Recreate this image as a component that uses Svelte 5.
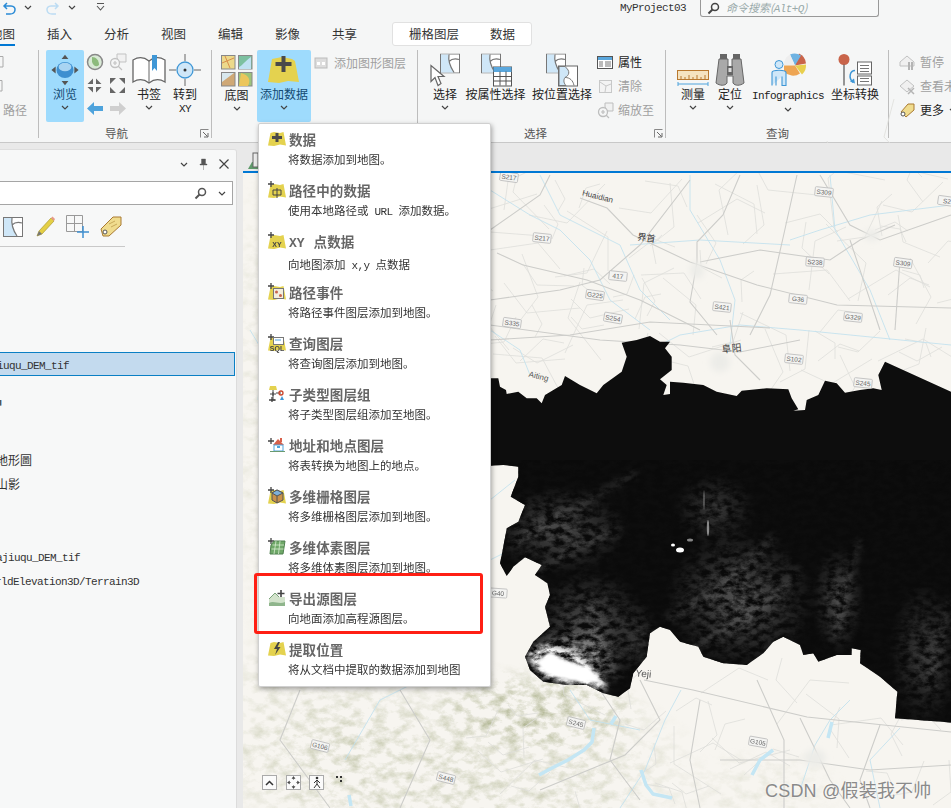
<script>
  const menu = [
    ['数据', '将数据添加到地图。', 'plus'],
    ['路径中的数据', '使用本地路径或<i>URL</i>添加数据。', 'path'],
    ['<i>XY</i>点数据', '向地图添加<i>x,y</i>点数据', 'xy'],
    ['路径事件', '将路径事件图层添加到地图。', 'event'],
    ['查询图层', '将查询图层添加到地图。', 'sql'],
    ['子类型图层组', '将子类型图层组添加至地图。', 'sub'],
    ['地址和地点图层', '将表转换为地图上的地点。', 'house'],
    ['多维栅格图层', '将多维栅格图层添加到地图。', 'cube'],
    ['多维体素图层', '将多维体素图层添加到地图。', 'voxel'],
    ['导出源图层', '向地面添加高程源图层。', 'ground'],
    ['提取位置', '将从文档中提取的数据添加到地图', 'bolt']
  ];

  const raw = [5,175,25,175,30,200,48,210,50,222,85,215,110,235,140,235,155,250,165,225,215,195,225,168,245,180,270,195,320,220,340,195,395,155,410,110,395,68,440,60,480,48,510,65,540,65,525,85,545,110,545,150,510,178,530,195,520,225,540,222,540,185,580,188,640,195,680,215,740,228,755,212,830,205,895,208,905,235,925,268,910,272,945,270,950,240,985,225,1005,182,1040,190,1065,218,1110,210,1150,205,1175,210,1165,165,1185,125,1390,218,1390,1208,1215,1195,1222,1115,1170,1070,1110,1030,1112,990,1085,985,1085,1005,1040,1005,985,1025,970,1000,940,1005,930,975,880,950,850,965,820,1000,770,1035,700,1030,640,1010,625,980,570,965,540,930,510,920,480,940,470,1010,430,1060,420,1105,385,1130,340,1120,290,1095,230,1095,160,1085,120,1050,105,1010,130,965,180,920,165,860,180,825,172,790,135,765,155,735,105,712,70,740,50,768,30,730,40,680,50,625,85,605,105,555,62,530,85,470,85,440,40,435,-60,440,-60,175];
  let dem = '';
  for (let i = 0; i < raw.length; i += 2) dem += (490 + raw[i] / 3).toFixed(1) + ',' + (320 + raw[i + 1] / 3).toFixed(1) + ' ';

  const glows = [
    [560, 530, 70, 45, 0.26], [590, 630, 60, 62, 0.3], [740, 600, 76, 70, 0.3], [715, 510, 42, 38, 0.18],
    [838, 600, 26, 55, 0.26], [925, 655, 36, 75, 0.2], [570, 660, 52, 30, 0.8], [640, 640, 20, 40, 0.14]
  ];
  const ridges = [
    '510,545 560,515 637,473',
    '525,580 580,545 620,530',
    '665,620 720,590 775,535',
    '690,650 760,610 800,570',
    '835,640 845,590 860,540',
    '590,600 600,650 620,680',
    '930,690 940,640 951,600'
  ];

  const roads = [
    '497,253 523,265 587,280 640,300 700,330',
    '580,198 607,208 633,235 690,262 757,285 837,305 951,308',
    '797,175 783,238 770,295 750,335',
    '740,175 723,215 697,242 697,262 690,302 717,335',
    '490,300 560,290 600,280 640,245 690,180',
    '490,230 540,195 550,175',
    '820,175 850,225 880,240 951,215',
    '700,262 760,250 830,260 860,240 895,225',
    '850,240 880,330',
    '900,260 895,330',
    '490,340 570,335 650,322 770,328',
    '490,325 600,340 680,345 740,352 800,340',
    '730,320 735,355 760,380',
    '644,680 693,690 807,717 951,732',
    '757,680 784,740 784,808',
    '600,690 620,720 610,760 640,800',
    '640,680 660,720 625,755 540,790',
    '700,700 690,760 700,808',
    '720,760 800,760 870,770 951,765',
    '800,718 830,780 850,808',
    '880,725 860,780 870,808',
    '300,690 280,740 330,808',
    '400,690 430,740 400,808'
  ];
  let seed = 41;
  const rnd = () => ((seed = (seed * 16807) % 2147483647) / 2147483647);
  const thin = [];
  for (let i = 0; i < 120; i++) {
    const low = i > 85;
    const x = 490 + rnd() * 460, y = low ? 690 + rnd() * 115 : 175 + rnd() * 190;
    const a = rnd() * 6.28;
    const l = 18 + rnd() * 38;
    const bx = x + Math.cos(a) * l, by = y + Math.sin(a) * l;
    const cx = bx + Math.cos(a + 1) * l * 0.7, cy = by + Math.sin(a + 1) * l * 0.7;
    thin.push(`${x.toFixed(0)},${y.toFixed(0)} ${bx.toFixed(0)},${by.toFixed(0)} ${cx.toFixed(0)},${cy.toFixed(0)}`);
  }
  const rivers = [
    '490,190 530,215 560,230 590,260 610,300 650,330',
    '540,175 560,215 620,245 640,290 670,320',
    '690,175 690,210 720,260 735,300 730,345',
    '830,175 835,230 870,290 890,340',
    '790,240 820,230 870,215 951,205',
    '630,245 700,240 790,245',
    '490,330 520,350 530,375',
    '660,345 680,335 740,325 800,330 951,345',
    '490,500 515,480',
    '490,560 520,545',
    '681,690 665,720 645,770 620,808',
    '850,700 830,720 815,745 800,790',
    '900,728 870,760 880,808',
    '570,690 590,720 640,730',
    '345,760 380,700 420,680',
    '250,330 262,350 258,400'
  ];
  const lakes = [
    '594,728 592,742 584,750 568,760 552,768 539,775',
    '641,770 646,785 653,794 672,798',
    '349,795 351,806',
    '616,716 611,724',
    '832,722 828,738',
    '773,750 760,760 752,775'
  ];
  const badges = [
    ['S217',509,177,8],['S217',542,238,6],['417',618,276,6],['G225',595,295,8],['S254',613,318,10],['S335',512,323,8],
    ['S421',722,307,6],['G36',798,299,6],['G329',853,317,6],['S238',815,262,4],['S309',824,192,6],['S309',903,263,8],
    ['S2',947,201,8],['S102',794,359,6],['S245',863,383,6],['G40',498,593,4],['S245',576,723,14],['G106',320,746,14],
    ['S448',446,778,14],['G105',758,742,10]
  ];
  const places = [['Huaidian',597,199,14,8,'#444'],['界首',646,241,8,9,'#333'],['Aiting',538,379,14,8,'#555'],['阜阳',732,352,-6,10,'#444'],['Yeji',643,677,6,10,'#555']];
</script>

<svg class="defs" width="0" height="0" aria-hidden="true">
  <defs>
    <symbol id="yellow" viewBox="0 0 18 18">
      <path d="M2.500 3 L6 2 L12 3 L15.500 2 L18 15.500 L12 14.500 L6 16 L0 15.500 Z" fill="#e4d24f"/>
    </symbol>
    <symbol id="tile" viewBox="0 0 20 20">
      <rect x=".5" y=".5" width="19" height="19" fill="#fff" stroke="#777"/>
      <path d="M1 1H9C8 7 10 13 14 19H1Z" fill="#cfe7f8"/>
      <path d="M9 1C8 7 10 13 14 19M9 8C12 5 16 5 19 6" fill="none" stroke="#777" stroke-width="1.200"/>
    </symbol>
    <symbol id="chev" viewBox="0 0 8 5">
      <path d="M1 1L4 4L7 1" fill="none" stroke="#444" stroke-width="1.200"/>
    </symbol>
    <symbol id="launch" viewBox="0 0 9 9">
      <path d="M.5 8.500V.5H8.500" fill="none" stroke="#888"/><path d="M3 3L7.500 7.500M8 4V8H4" fill="none" stroke="#666"/>
    </symbol>
  </defs>
</svg>

<div class="app">
  <div class="titlebar">
    <svg class="undo" width="13" height="14" viewBox="0 0 13 14"><path d="M4 2L1 5L4 8M1 5H8C14 5 13 13 7 13H3" fill="none" stroke="#2a8bd6" stroke-width="1.500"/></svg>
    <svg class="tchev" width="8" height="5"><use href="#chev"/></svg>
    <svg class="redo" width="13" height="14" viewBox="0 0 13 14"><path d="M9 2L12 5L9 8M12 5H5C-1 5 0 13 6 13H10" fill="none" stroke="#bcdcf3" stroke-width="1.500"/></svg>
    <svg class="tchev2" width="8" height="5"><use href="#chev"/></svg>
    <svg class="tmore" width="9" height="9" viewBox="0 0 9 9"><path d="M1 .5H8M1 3L4.500 7L8 3" fill="none" stroke="#555" stroke-width="1.100"/></svg>
    <span class="project"><i class="lat">MyProject03</i></span>
    <div class="search">
      <svg width="13" height="13" viewBox="0 0 13 13"><circle cx="8" cy="5" r="3.500" fill="none" stroke="#444" stroke-width="1.500"/><path d="M5.500 7.500L1.500 11.500" stroke="#444" stroke-width="2"/></svg>
      <span>命令搜索(<i class="lat">Alt+Q</i>)</span>
    </div>
  </div>

  <div class="tabs">
    <span class="tab first">地图</span>
    <span class="tab">插入</span><span class="tab">分析</span><span class="tab">视图</span><span class="tab">编辑</span><span class="tab">影像</span><span class="tab">共享</span>
    <div class="context"><span>栅格图层</span><span>数据</span></div>
  </div>

  <div class="ribbon">
    <section class="group g1">
      <div class="frag"><svg width="4" height="12"><path d="M0 .5H3V11H0" fill="none" stroke="#aaa"/></svg></div>
      <div class="frag"><svg width="3" height="12"><path d="M0 .5H2V11H0" fill="none" stroke="#aaa"/></svg></div>
      <div class="frag dim text">路径</div>
    </section>

    <section class="group g2">
      <div class="body">
        <div class="big w38 on">
          <svg width="38" height="40" viewBox="0 0 38 40">
            <path d="M19 2L23 7H15ZM19 38L23 33H15ZM3 20L8 16V24ZM35 20L30 16V24Z" fill="#555"/>
            <ellipse cx="19" cy="20" rx="10" ry="9.500" fill="#3d8fd0"/>
            <ellipse cx="19" cy="16.500" rx="7.500" ry="5" fill="#a9d4f2"/>
          </svg>
          <span class="lb on-text">浏览</span>
          <svg class="cv" width="8" height="5"><use href="#chev"/></svg>
        </div>
        <div class="grid6">
          <svg width="18" height="18" viewBox="0 0 18 18"><circle cx="9" cy="9" r="7.500" fill="#d9ead6" stroke="#888" stroke-width="1.500"/><path d="M6 4C10 4 13 7 13 12C10 15 7 12 6 9Z" fill="#8cbb7c"/></svg>
          <svg width="18" height="18" viewBox="0 0 18 18" opacity=".55"><circle cx="6" cy="10" r="4.500" fill="none" stroke="#999" stroke-width="1.300"/><path d="M4 10H8M6 8V12M9 13L13 17" stroke="#999" stroke-width="1.200"/><path d="M8 1H17V9H11L8 5Z" fill="#eee" stroke="#999"/></svg>
          <svg width="17" height="17" viewBox="0 0 17 17"><path d="M7 7V1.500L1.500 7ZM10 7V1.500L15.500 7ZM7 10V15.500L1.500 10ZM10 10V15.500L15.500 10Z" fill="#666"/></svg>
          <svg width="17" height="17" viewBox="0 0 17 17"><path d="M1 1H7L1 7ZM16 1H10L16 7ZM1 16H7L1 10ZM16 16H10L16 10Z" fill="#666"/></svg>
          <svg width="18" height="15" viewBox="0 0 18 15"><path d="M1 7.500L8 1V5H17V10H8V14Z" fill="#4ea3dc"/></svg>
          <svg width="18" height="15" viewBox="0 0 18 15"><path d="M17 7.500L10 1V5H1V10H10V14Z" fill="#cfcfcf"/></svg>
        </div>
        <div class="big w34 mk5">
          <svg width="34" height="30" viewBox="0 0 34 30"><path d="M1 5C6 2 12 2 17 6C22 2 28 2 33 5V27C28 24 22 24 17 28C12 24 6 24 1 27Z" fill="#fff" stroke="#666" stroke-width="1.300"/><path d="M17 6V28" stroke="#666"/><path d="M20 0H25V16L22.500 13L20 16Z" fill="#3f97d6"/></svg>
          <span class="lb">书签</span>
          <svg class="cv" width="8" height="5"><use href="#chev"/></svg>
        </div>
        <div class="big w32 mk3">
          <svg width="32" height="32" viewBox="0 0 32 32"><path d="M16 0V7M16 25V32M0 16H7M25 16H32" stroke="#666"/><circle cx="16" cy="16" r="8" fill="#cfe7f8" stroke="#3f97d6" stroke-width="1.300"/><circle cx="16" cy="16" r="1.500" fill="#333"/></svg>
          <span class="lb">转到</span>
          <span class="sub"><i class="lat">XY</i></span>
        </div>
      </div>
      <div class="glabel gl2">导航</div>
      <svg class="launcher" width="9" height="9"><use href="#launch"/></svg>
    </section>

    <section class="group g3">
      <div class="body">
        <div class="big w33">
          <svg class="map4" width="32" height="32" viewBox="0 0 32 32">
            <rect x=".5" y=".5" width="13.500" height="13.500" fill="#ecd98b" stroke="#888"/><path d="M1 8L13 3M4 1L9 13" stroke="#d98e4a"/>
            <rect x="17.500" y=".5" width="13.500" height="13.500" fill="#7cc0a0" stroke="#888"/><path d="M18 12C22 10 24 6 30 2V14H18Z" fill="#bfe1f2"/>
            <rect x=".5" y="17.500" width="13.500" height="13.500" fill="#cfa876" stroke="#888"/><path d="M1 18H13L1 27Z" fill="#d8e8ee"/>
            <rect x="17.500" y="17.500" width="13.500" height="13.500" fill="#9dc47a" stroke="#888"/><path d="M20 18C28 20 30 25 27 31H18Z" fill="#ecc65c"/>
          </svg>
          <span class="lb">底图</span>
          <svg class="cv" width="8" height="5"><use href="#chev"/></svg>
        </div>
        <div class="big w54 on mk4">
          <svg width="32" height="34" viewBox="0 0 32 34"><path d="M4 6L14 4L24 6L27 8L31 29L20 28L11 30L0 29Z" fill="#e4d24f"/><path d="M13.500 3H17.500V9H23.500V13H17.500V19H13.500V13H7.500V9H13.500Z" fill="#4a4a4a"/></svg>
          <span class="lb on-text">添加数据</span>
          <svg class="cv" width="8" height="5"><use href="#chev"/></svg>
        </div>
        <div class="smallrow dim top6">
          <svg width="14" height="12" viewBox="0 0 14 12"><rect x="1" y="1" width="12" height="10" fill="#ddd" stroke="#bbb"/><rect x="3" y="5" width="3" height="3" fill="#fff"/><rect x="8" y="5" width="3" height="3" fill="#fff"/></svg>
          <span>添加图形图层</span>
        </div>
      </div>
    </section>

    <section class="group g4">
      <div class="body">
        <div class="big w30">
          <svg width="30" height="33" viewBox="0 0 30 33"><use href="#tile" x="10" y="0" width="20" height="20"/><path d="M1 12L1 28L5 24L8 32L11 30L8 23L14 23Z" fill="#fff" stroke="#666" stroke-width="1.200"/></svg>
          <span class="lb">选择</span>
          <svg class="cv" width="8" height="5"><use href="#chev"/></svg>
        </div>
        <div class="big w59 mk6">
          <svg width="32" height="33" viewBox="0 0 32 33"><use href="#tile" x="1" y="0" width="20" height="20"/><rect x="13.500" y="13.500" width="18" height="19" fill="#fff" stroke="#555"/><rect x="13.500" y="13.500" width="18" height="5" fill="#5aa7dd"/><path d="M14 23H31M14 27.500H31M20 18V32M26 18V32" stroke="#555"/></svg>
          <span class="lb">按属性选择</span>
        </div>
        <div class="big w60 mk7">
          <svg width="32" height="33" viewBox="0 0 32 33"><use href="#tile" x="0" y="0" width="20" height="20"/><rect x="12.500" y="12.500" width="19" height="20" fill="#fff" stroke="#666"/><path d="M13 13H19C25 18 23 22 19 24C17 27 18 30 20 32H13Z" fill="#cfe7f8" stroke="#777"/><path d="M19 24C24 24 27 27 28 32" fill="none" stroke="#777"/></svg>
          <span class="lb">按位置选择</span>
        </div>
        <div class="smalls mk5">
          <div class="smallrow">
            <svg width="16" height="13" viewBox="0 0 16 13"><rect x=".5" y=".5" width="15" height="12" fill="#fff" stroke="#555"/><rect x="1" y="1" width="14" height="3" fill="#5aa7dd"/><path d="M2 6H6M8 6H14M2 8H6M8 8H14M2 10H6M8 10H14" stroke="#777"/></svg>
            <span>属性</span>
          </div>
          <div class="smallrow dim">
            <svg width="16" height="13" viewBox="0 0 16 13" opacity=".6"><rect x="2.500" y=".5" width="12" height="12" fill="#f2f2f2" stroke="#aaa"/><path d="M3 2L9 6L8 12M9 6L14 4" fill="none" stroke="#aaa"/></svg>
            <span>清除</span>
          </div>
          <div class="smallrow dim">
            <svg width="16" height="15" viewBox="0 0 16 15" opacity=".6"><circle cx="6" cy="9" r="4.500" fill="none" stroke="#999" stroke-width="1.300"/><path d="M4 9H8M6 7V11M9 12L12 15" stroke="#999" stroke-width="1.200"/><path d="M8 0H16V8H11L8 4Z" fill="#eee" stroke="#999"/></svg>
            <span>缩放至</span>
          </div>
        </div>
      </div>
      <div class="glabel gl4">选择</div>
      <svg class="launcher" width="9" height="9"><use href="#launch"/></svg>
    </section>

    <section class="group g5">
      <div class="body">
        <div class="big w34">
          <svg class="low" width="32" height="17" viewBox="0 0 32 17"><rect x=".5" y=".5" width="31" height="9" fill="#f5e3c0" stroke="#b9792f"/><path d="M4 10V6M8 10V7M12 10V5M16 10V7M20 10V5M24 10V7M28 10V5" stroke="#b9792f"/><path d="M1 14H31M1 12V16M31 12V16" stroke="#4ea3dc"/></svg>
          <span class="lb">测量</span>
          <svg class="cv" width="8" height="5"><use href="#chev"/></svg>
        </div>
        <div class="big w30 mk5">
          <svg width="30" height="32" viewBox="0 0 30 32"><rect x="5" y="0" width="7" height="5" fill="#666"/><rect x="18" y="0" width="7" height="5" fill="#666"/><path d="M4 5H13V14H17V5H26L29 29C25 32 20 32 18 29V22H12V29C10 32 5 32 1 29Z" fill="#a9a9a9" stroke="#666"/><rect x="12" y="12" width="6" height="9" fill="#666"/><rect x="13.500" y="14" width="3" height="4" fill="#ddd"/></svg>
          <span class="lb">定位</span>
          <svg class="cv" width="8" height="5"><use href="#chev"/></svg>
        </div>
        <div class="big w72 mk7">
          <svg width="36" height="33" viewBox="0 0 36 33"><path d="M29 0A12 12 0 0 1 36 10L25 12Z" fill="#c9644a"/><path d="M20 1A12 12 0 0 1 31 2L25 12Z" fill="#6fb3e2"/><path d="M14 12A12 12 0 0 1 20 1L25 12Z" fill="#eee"/><path d="M14 12H25L30 20A12 12 0 0 1 14 18Z" fill="#eea553"/><path d="M25 12L36 11A12 12 0 0 1 32 21Z" fill="#e8cf4d"/><circle cx="9" cy="11" r="4" fill="#cfe7f8" stroke="#3f97d6"/><path d="M2 32V19C2 16 16 16 16 19V32H12V23M6 23V32Z" fill="#cfe7f8" stroke="#3f97d6" stroke-width="1.100"/></svg>
          <span class="lb"><i class="lat">Infographics</i></span>
          <svg class="cv" width="8" height="5"><use href="#chev"/></svg>
        </div>
        <div class="big w50 mk6">
          <svg width="34" height="33" viewBox="0 0 34 33"><circle cx="6" cy="6" r="5.500" fill="#c9644a"/><path d="M6 11V32" stroke="#555" stroke-width="1.200"/><path d="M17 17C12 17 10 24 15 29" fill="none" stroke="#3f97d6" stroke-width="1.500"/><path d="M12 28L17 30L16 25Z" fill="#3f97d6"/><rect x="19.500" y="8.500" width="14" height="12" fill="#fff" stroke="#666"/><rect x="19.500" y="22.500" width="14" height="9" fill="#fff" stroke="#666"/><path d="M22 12H31M22 15H31M22 18H31M22 25H31M22 28H31" stroke="#777"/></svg>
          <span class="lb">坐标转换</span>
        </div>
      </div>
      <div class="glabel gl5">查询</div>
    </section>

    <section class="group g6">
      <div class="smalls">
        <div class="smallrow dim">
          <svg width="16" height="15" viewBox="0 0 16 15" opacity=".7"><path d="M1 7L8 1L15 7V11H1Z" fill="#eee" stroke="#aaa"/><path d="M10 7V15M13 7V15" stroke="#999" stroke-width="2"/></svg>
          <span>暂停</span>
        </div>
        <div class="smallrow dim">
          <svg width="16" height="15" viewBox="0 0 16 15" opacity=".7"><path d="M1 7L8 1L15 7L8 13Z" fill="#eee" stroke="#aaa"/><path d="M9 9L15 15M15 9L9 15" stroke="#999" stroke-width="1.500"/></svg>
          <span>查看未保存</span>
        </div>
        <div class="smallrow">
          <svg width="16" height="15" viewBox="0 0 16 15"><path d="M2 9L9 1H15V7L7 14Z" fill="#f0dc8e" stroke="#a97a33"/><circle cx="4" cy="11" r="2" fill="#fff" stroke="#555"/></svg>
          <span>更多</span>
          <svg width="8" height="5"><use href="#chev"/></svg>
        </div>
      </div>
    </section>
  </div>

  <div class="main">
    <aside class="panel">
      <div class="phead">
        <svg width="8" height="5"><use href="#chev"/></svg>
        <svg width="9" height="12" viewBox="0 0 9 12"><path d="M2.500 1H6.500V6H8V7H1V6H2.500ZM4.500 7V12" fill="#555" stroke="#555" stroke-width=".4"/></svg>
        <svg width="10" height="10" viewBox="0 0 10 10"><path d="M.5 .5L9.500 9.500M9.500 .5L.5 9.500" stroke="#444" stroke-width="1.200"/></svg>
      </div>
      <div class="psearch">
        <svg width="13" height="13" viewBox="0 0 13 13"><circle cx="8" cy="5" r="3.500" fill="none" stroke="#555" stroke-width="1.500"/><path d="M5.500 7.500L1.500 11.500" stroke="#555" stroke-width="2"/></svg>
        <svg width="8" height="5"><use href="#chev"/></svg>
      </div>
      <div class="ptools">
        <svg width="20" height="20"><use href="#tile" width="20" height="20"/></svg>
        <svg width="21" height="22" viewBox="0 0 21 22"><path d="M2 20L4 15L16 2L19 5L7 18Z" fill="#e4cf45" stroke="#a99a30" stroke-width=".7"/><path d="M16 2L17.500 .5L20 3L19 5Z" fill="#e89a8a"/><path d="M2 20L4 15L7 18Z" fill="#777"/></svg>
        <svg width="24" height="23" viewBox="0 0 24 23"><path d="M.5 .5H16.500V16.500H.5ZM.5 8.500H16.500M8.500 .5V16.500" fill="none" stroke="#999"/><path d="M11 17H23M17 11V23" stroke="#3f8fd0" stroke-width="1.500"/></svg>
        <svg width="22" height="22" viewBox="0 0 22 22"><path d="M1 13L13 1H21V9L9 20L3 20Z" fill="#f0dc8e" stroke="#a97a33"/><path d="M9 8L15 5M11 11L17 8" stroke="#c9aa5a"/><circle cx="5" cy="16" r="2" fill="#fff" stroke="#555"/></svg>
      </div>
      <div class="pline"></div>
      <div class="row sel"><i class="lat neg9">jiuqu_DEM_tif</i></div>
      <div class="row m16"><span class="mark">■</span></div>
      <div class="row m14"><span class="mark">:</span></div>
      <div class="row cj">地形圖</div>
      <div class="row m2 cj">山影</div>
      <div class="row m50"><i class="lat neg4">ajiuqu_DEM_tif</i></div>
      <div class="row m2"><i class="lat neg11">orldElevation3D/Terrain3D</i></div>
    </aside>

    <div class="mappane">
      <div class="mstrip">
        <svg class="mtab" width="12" height="18" viewBox="0 0 12 18"><path d="M1 17L5 10H12V17Z" fill="#5e9a6a"/><rect x="6" y="1" width="5" height="14" fill="#eee" stroke="#666"/></svg>
      </div>
      <svg class="map" width="708" height="635" viewBox="243 173 708 635">
        <defs>
          <filter id="hills" x="0" y="0" width="100%" height="100%" color-interpolation-filters="sRGB">
            <feTurbulence type="fractalNoise" baseFrequency="0.075 0.11" numOctaves="5" seed="7"/>
            <feColorMatrix values="0 0 0 0 .68  0 0 0 0 .7  0 0 0 0 .56  2.200 0 0 0 -.92"/>
          </filter>
          <filter id="streak" x="0" y="0" width="100%" height="100%" color-interpolation-filters="sRGB">
            <feTurbulence type="fractalNoise" baseFrequency="0.11 0.17" numOctaves="5" seed="11"/>
            <feColorMatrix values="0 0 0 0 .04  0 0 0 0 .04  0 0 0 0 .04  2.600 0 0 0 -.85"/>
          </filter>
          <filter id="soft"><feGaussianBlur stdDeviation=".4"/></filter>
          <filter id="soft3"><feGaussianBlur stdDeviation="3"/></filter>
          <filter id="soft1"><feGaussianBlur stdDeviation="1.500"/></filter>
          <radialGradient id="glow"><stop offset="0" stop-color="#fff"/><stop offset="1" stop-color="#fff" stop-opacity="0"/></radialGradient>
          <radialGradient id="fade"><stop offset="0" stop-color="#fff"/><stop offset=".55" stop-color="#fff" stop-opacity=".75"/><stop offset="1" stop-color="#fff" stop-opacity="0"/></radialGradient>
          <mask id="terrain" maskUnits="userSpaceOnUse" x="243" y="173" width="708" height="635">
            <ellipse cx="470" cy="770" rx="240" ry="110" fill="url(#fade)" opacity=".65"/>
            <ellipse cx="540" cy="710" rx="110" ry="45" fill="url(#fade)"/>
            <ellipse cx="300" cy="730" rx="110" ry="110" fill="url(#fade)" opacity=".4"/>
            <ellipse cx="760" cy="790" rx="90" ry="45" fill="url(#fade)" opacity=".22"/>
            <ellipse cx="255" cy="400" rx="25" ry="260" fill="url(#fade)" opacity=".22"/>
          </mask>
          <clipPath id="demclip"><polygon points={dem}/></clipPath>
        </defs>

        <rect x="243" y="173" width="708" height="635" fill="#f7f5f0"/>
        <rect x="243" y="173" width="708" height="635" filter="url(#hills)" mask="url(#terrain)"/>
        <g fill="none" filter="url(#soft)">
          {#each thin as p}<polyline points={p} stroke="#dededb" stroke-width=".8"/>{/each}
          {#each rivers as p}<polyline points={p} stroke="#c4e2ee" stroke-width=".9"/>{/each}
          {#each roads as p}<polyline points={p} stroke="#cdcdca" stroke-width="1.100"/>{/each}
          {#each lakes as p}<polyline points={p} stroke="#c4e6f4" stroke-width="3.500" stroke-linejoin="round"/>{/each}
        </g>
        <g fill="#ececE8" filter="url(#soft3)">
          <ellipse cx="815" cy="758" rx="11" ry="9"/>
          <ellipse cx="697" cy="270" rx="7" ry="9"/>
          <ellipse cx="720" cy="362" rx="10" ry="10"/>
          <ellipse cx="872" cy="235" rx="8" ry="6"/>
        </g>

        <g clip-path="url(#demclip)">
          <rect x="480" y="320" width="480" height="410" fill="#0d0d0d"/>
          <g filter="url(#soft3)">
            {#each glows as g}
              <ellipse cx={g[0]} cy={g[1]} rx={g[2]} ry={g[3]} fill="url(#glow)" opacity={g[4]}/>
            {/each}
            {#each ridges as p}
              <polyline points={p} fill="none" stroke="#fff" stroke-opacity=".09" stroke-width="9"/>
            {/each}
          </g>
          <path d="M527 655C540 640 560 645 575 655C595 668 605 680 608 690L575 686L540 675Z" fill="#fff" filter="url(#soft3)"/>
          <rect x="480" y="460" width="480" height="270" filter="url(#streak)"/>
          <path d="M536 662L550 652L565 660L590 668L604 684L570 681L545 674Z" fill="#fff" filter="url(#soft1)"/>
          <g fill="#fff" filter="url(#soft)">
            <ellipse cx="680" cy="550" rx="4" ry="2.500"/>
            <ellipse cx="673" cy="545" rx="2" ry="1.500"/>
            <ellipse cx="708" cy="528" rx="1.200" ry="8" opacity=".5"/>
            <ellipse cx="704" cy="500" rx=".8" ry="10" opacity=".3"/>
            <ellipse cx="690" cy="540" rx="3" ry="1.500" opacity=".5"/>
          </g>
        </g>

        {#each badges as b}
          <g transform="translate({b[1]} {b[2]}) rotate({b[3]})">
            <rect x="-9" y="-4.500" width="18" height="9" rx="1" fill="#f4f4f2" stroke="#bbb" stroke-width=".8"/>
            <text class="badge" text-anchor="middle" y="2.500">{b[0]}</text>
          </g>
        {/each}
        {#each places as p}
          <text class="place" text-anchor="middle" transform="translate({p[1]} {p[2]}) rotate({p[3]})" font-size={p[4]} fill={p[5]}>{p[0]}</text>
        {/each}
      </svg>
      <div class="mapbtns">
        <span class="mbtn"><svg width="9" height="6" viewBox="0 0 9 6"><path d="M1 5L4.500 1.500L8 5" fill="none" stroke="#333" stroke-width="1.500"/></svg></span>
        <span class="mbtn g9"><svg width="13" height="13" viewBox="0 0 13 13"><path d="M6.500 1V4M6.500 9V12M1 6.500H4M9 6.500H12M6.500 .5L5 2.500H8ZM6.500 12.500L5 10.500H8ZM.5 6.500L2.500 5V8ZM12.500 6.500L10.500 5V8Z" fill="#444" stroke="#444" stroke-width=".5"/></svg></span>
        <span class="mbtn g8"><svg width="10" height="13" viewBox="0 0 10 13"><circle cx="5" cy="2" r="1.300" fill="#333"/><path d="M5 4L2 7M5 4L8 7M5 4V8L2 12M5 8L8 12" fill="none" stroke="#333"/></svg></span>
        <span class="dots"><svg width="6" height="6"><path d="M0 0H2V2H0ZM4 0H6V2H4ZM4 4H6V6H4Z" fill="#333"/></svg></span>
      </div>
      <div class="wm">CSDN @假装我不帅</div>
    </div>
  </div>

  <div class="menu">
    {#each menu as m}
      <div class="mi">
        <svg class="mic" width="18" height="18" viewBox="0 0 18 18">
          {#if m[2] === 'plus'}
            <use href="#yellow" width="18" height="18"/><path d="M7.500 3H10.500V6H14V9H10.500V12H7.500V9H4V6H7.500Z" fill="#4a4a4a"/>
          {:else if m[2] === 'path'}
            <use href="#yellow" width="18" height="18" y="1"/><path d="M3 0V6M0 3H6" stroke="#444" stroke-width="1.300"/><path d="M5 9H13V14H5ZM9 7V17" fill="none" stroke="#444"/>
          {:else if m[2] === 'xy'}
            <use href="#yellow" width="18" height="18" y="1"/><path d="M3 0V6M0 3H6" stroke="#444" stroke-width="1.300"/><text class="mtxt" x="9" y="15" text-anchor="middle">XY</text>
          {:else if m[2] === 'event'}
            <use href="#yellow" width="18" height="18" y="1"/><path d="M3 0V6M0 3H6" stroke="#444" stroke-width="1.300"/><rect x="5.500" y="5.500" width="10" height="10" fill="#f4efdc" stroke="#777"/><circle cx="8.500" cy="9" r="1.500" fill="#c9644a"/><circle cx="12.500" cy="12.500" r="1.500" fill="#c9644a"/>
          {:else if m[2] === 'sql'}
            <use href="#yellow" width="18" height="18" y="1"/><path d="M3 0V6M0 3H6" stroke="#444" stroke-width="1.300"/><rect x="5.500" y="3.500" width="10" height="7" fill="#fff" stroke="#777"/><path d="M7 6H13" stroke="#4ea3dc"/><text class="mtxt" x="9" y="17" text-anchor="middle">SQL</text>
          {:else if m[2] === 'sub'}
            <path d="M2 1H8L9 5H1Z" fill="#e4d24f"/><path d="M5 5V15M3 15H8M2 9H8M5 7V11" stroke="#444"/><path d="M8 8H13" stroke="#444"/><circle cx="13" cy="8" r="2" fill="none" stroke="#c9442a" stroke-width="1.300"/><path d="M12 15H16L14 11Z" fill="#3f97d6"/><path d="M1 15H7M4 12V17" stroke="#444" stroke-width="1.300"/>
          {:else if m[2] === 'house'}
            <path d="M3 2V8M0 5H6" stroke="#444" stroke-width="1.300"/><path d="M5 9L10 3L16 9Z" fill="#d8604a"/><path d="M12 2H14V6H12Z" fill="#d8604a"/><rect x="6" y="9" width="9" height="6" fill="#fff" stroke="#4ea3dc"/><rect x="9" y="10" width="3" height="2" fill="#4ea3dc"/><path d="M2 15.500H17" stroke="#6a9a70"/>
          {:else if m[2] === 'cube'}
            <use href="#yellow" width="18" height="18" y="1"/><path d="M3 0V6M0 3H6" stroke="#444" stroke-width="1.300"/><path d="M9 3L15 6V13L9 16L4 13V6Z" fill="#c9914a" stroke="#555"/><path d="M4 6L9 9L15 6L9 3Z" fill="#7eb0d8" stroke="#555"/><path d="M9 9V16" stroke="#555"/>
          {:else if m[2] === 'voxel'}
            <path d="M3 0V6M0 3H6" stroke="#444" stroke-width="1.300"/><path d="M6 3H17L15 16H2L3 7Z" fill="#6fa868" stroke="#4f7f4f"/><path d="M4.500 7H16M3.500 11H15.500M8 3L6 16M12 3L10.500 16" stroke="#d8ecd2" stroke-width=".8"/>
          {:else if m[2] === 'ground'}
            <path d="M1 10L7 4L11 8H17V17H1Z" fill="#d3e3cc"/><path d="M1 14C6 11 11 16 17 13V17H1Z" fill="#8fb58c"/><path d="M1 10L7 4L11 8" fill="none" stroke="#7ba37a"/><path d="M13 1V8M9.500 4.500H16.500" stroke="#444" stroke-width="1.600"/>
          {:else}
            <use href="#yellow" width="18" height="18"/><path d="M10 2L6 9H9L7 15L12.500 7H9.500L12 2Z" fill="#444"/>
          {/if}
        </svg>
        <div class="mtext">
          <div class="mt">{@html m[0]}</div>
          <div class="md">{@html m[1]}</div>
        </div>
      </div>
    {/each}
  </div>
  <div class="redbox"></div>
</div>

<style>
  :global(body) { margin: 0; background: #e9e9e9; }
  :global(i) { font-style: normal; font-family: "Liberation Mono", monospace; font-size: 11px; letter-spacing: -0.6px; }
  .defs { position: absolute; }
  svg { display: block; flex: none; overflow: visible; }
  .app {
    position: relative; width: 951px; height: 808px; overflow: hidden; background: #e9e9e9;
    font: 12px/16px "Noto Sans CJK SC", "Liberation Sans", sans-serif; color: #222;
  }
  .lat { font-family: "Liberation Mono", monospace; font-size: 11px; letter-spacing: -0.6px; font-style: normal; }

  .titlebar { height: 22px; background: #f5f6f6; display: flex; align-items: flex-start; padding-left: 3px; box-sizing: border-box; width: 951px; }
  .undo { margin-top: 1px; }
  .tchev { margin: 5px 0 0 8px; }
  .redo { margin: 1px 0 0 14px; }
  .tchev2 { margin: 5px 0 0 9px; }
  .tmore { margin: 3px 0 0 20px; }
  .project { margin-left: 515px; line-height: 14px; margin-top: -1px; }
  .project .lat { color: #333; }
  .search {
    margin-left: 14px; width: 179px; height: 17px; box-sizing: border-box; border: 1px solid #999; border-top: 0;
    border-radius: 0 0 3px 3px; display: flex; align-items: center; gap: 6px; padding-left: 6px;
    color: #9aa; font-size: 11px; font-style: italic; background: #f7f8f8;
  }
  .search .lat { color: #9aa; font-style: italic; }

  .tabs { height: 25px; background: #f5f6f6; display: flex; position: relative; }
  .tab { width: 57px; flex: none; text-align: center; font-size: 12.5px; line-height: 24px; color: #333; box-sizing: border-box; }
  .tab.first { width: 32px; margin-left: -17px; margin-right: 16px; text-align: right; border-bottom: 2px solid #0078d4; height: 24px; }
  .context {
    margin-left: 19px; width: 140px; height: 24px; box-sizing: border-box; background: #fff; border: 1px solid #e1e1e1; border-radius: 3px;
    display: flex; font-size: 12.5px; line-height: 22px; color: #333; padding-left: 16px; gap: 31px;
  }

  .ribbon { height: 96px; background: #f5f6f6; border-bottom: 1px solid #c8c8c8; box-sizing: border-box; display: flex; padding-top: 3px; }
  .group { position: relative; height: 88px; box-sizing: border-box; border-right: 1px solid #bdbdbd; flex: none; }
  .g1 { width: 39px; }
  .g2 { width: 173px; padding-left: 7px; }
  .g3 { width: 206px; padding-left: 8px; }
  .g4 { width: 248px; padding-left: 12px; }
  .g5 { width: 223px; padding-left: 10px; }
  .g6 { width: 62px; border: 0; padding-left: 10px; }
  .frag { height: 24px; display: flex; align-items: center; }
  .frag.text { padding-left: 3px; font-size: 12px; }
  .dim, .dim span { color: #a0a0a0; }
  .body { display: flex; align-items: flex-start; }
  .big { display: flex; flex-direction: column; align-items: center; height: 72px; flex: none; padding-top: 3px; box-sizing: border-box; border-radius: 2px; position: relative; }
  .big > svg:first-child { height: 34px; margin-bottom: -1px; }
  .big > svg.low { height: 17px; margin-top: 17px; }
  .on { background: #9edbfd; }
  .w30 { width: 30px; } .w32 { width: 32px; } .w33 { width: 33px; } .w34 { width: 34px; } .w38 { width: 38px; }
  .w50 { width: 50px; } .w54 { width: 54px; } .w59 { width: 59px; } .w60 { width: 60px; } .w72 { width: 72px; }
  .mk3 { margin-left: 3px; } .mk4 { margin-left: 4px; } .mk5 { margin-left: 5px; } .mk6 { margin-left: 6px; } .mk7 { margin-left: 7px; }
  .lb { white-space: nowrap; line-height: 16px; color: #222; }
  .lb.on-text { color: #134a72; }
  .cv { margin-top: 3px; }
  .sub { line-height: 10px; }
  .map4 { margin-top: 1px; }
  .grid6 { display: grid; grid-template-columns: 18px 18px; column-gap: 5px; row-gap: 4px; margin: 3px 0 0 2px; width: 41px; grid-template-rows: 20px 20px 18px; }
  .glabel { position: absolute; bottom: -2px; line-height: 14px; font-size: 11.5px; color: #555; }
  .gl2 { left: 66px; } .gl4 { left: 106px; } .gl5 { left: 100px; }
  .launcher { position: absolute; right: 2px; bottom: 0; }
  .smalls { display: flex; flex-direction: column; flex: none; }
  .smallrow { height: 24px; display: flex; align-items: center; gap: 5px; white-space: nowrap; }
  .top6 { margin: 1px 0 0 3px; gap: 6px; }

  .main { display: flex; height: 665px; }
  .panel { position: relative; width: 237px; flex: none; margin-top: 6px; background: #f7f8f8; border-right: 1px solid #dcdcdc; border-top: 1px solid #dedede; border-radius: 0 3px 0 0; box-sizing: border-box; }
  .phead { height: 25px; box-sizing: border-box; padding-top: 3px; display: flex; justify-content: flex-end; align-items: center; gap: 11px; padding-right: 7px; }
  .psearch { margin-top: 6px; height: 24px; width: 233px; box-sizing: border-box; background: #fff; border: 1px solid #a5a5a5; border-left: 0; display: flex; justify-content: flex-end; align-items: center; gap: 11px; padding-right: 6px; }
  .ptools { display: flex; height: 31px; gap: 10px; align-items: center; margin-top: 6px; padding-left: 3px; }
  .ptools svg:nth-child(2) { margin-left: 2px; }
  .pline { width: 125px; height: 1px; background: #c9c9c9; margin-top: 4px; }
  .row { height: 22px; line-height: 22px; white-space: nowrap; color: #333; overflow: hidden; }
  .row .lat { color: #333; display: inline-block; }
  .sel { height: 24px; width: 235px; margin-top: 105px; box-sizing: border-box; background: #c3daee; border: 1px solid #0a7fc4; border-left: 0; line-height: 22px; }
  .m2 { margin-top: 2px; } .m14 { margin-top: 14px; } .m16 { margin-top: 15px; } .m50 { margin-top: 50px; }
  .neg9 { margin-left: -9px; } .neg4 { margin-left: -4px; } .neg11 { margin-left: -11px; }
  .mark { display: block; margin-left: -5px; font-size: 7px; color: #555; }
  .cj { margin-left: -4px; font-size: 12px; }

  .mappane { position: relative; flex: none; width: 708px; margin-left: 6px; }
  .mstrip { height: 28px; background: #e9e9e9; border-bottom: 2px solid #0078d4; position: relative; }
  .mtab { position: absolute; left: 4px; top: 9px; }
  .map { display: block; }
  .badge { font: 6.500px "Liberation Sans", sans-serif; fill: #666; }
  .place { font-family: "Liberation Sans", "Noto Sans CJK SC", sans-serif; }
  .mapbtns { position: absolute; left: 19px; top: 632px; display: flex; align-items: flex-start; gap: 8px; }
  .mbtn { width: 15px; height: 15px; box-sizing: border-box; background: #fbfbfb; border: 1px solid #aaa; display: flex; align-items: center; justify-content: center; }
  .g9 { margin-left: 1px; }
  .dots { margin-left: 4px; padding-top: 1px; }
  .wm { position: absolute; left: 522px; top: 637px; font: 18px/22px "Liberation Sans", "Noto Sans CJK SC", sans-serif; color: #8a8a8a; white-space: nowrap; letter-spacing: .2px; text-shadow: 0 0 2px #fff; }

  .menu { position: absolute; left: 258px; top: 123px; width: 233px; height: 564px; box-sizing: border-box; background: #fff; border: 1px solid #d0d0d0; border-radius: 2px; padding-top: 1px; box-shadow: 1px 2px 5px rgba(0,0,0,.35); }
  .mi { height: 51px; display: flex; gap: 3px; padding: 5px 0 0 9px; box-sizing: border-box; }
  .mt { font-size: 13.500px; line-height: 18px; font-weight: 700; color: #666; white-space: nowrap; letter-spacing: .1px; }
  .mt :global(i) { font-size: 13px; letter-spacing: 0; font-weight: 700; color: #666; margin-right: 9px; }
  .md { font-size: 11.500px; line-height: 20px; color: #333; white-space: nowrap; margin: 1px 0 0 -1px; }
  .md :global(i) { font-size: 11px; margin: 0 6px; }
  .mtxt { font: 700 7px "Liberation Sans", sans-serif; fill: #444; }
  .redbox { position: absolute; left: 254px; top: 573px; width: 229px; height: 61px; box-sizing: border-box; border: 3px solid #ff1f14; border-radius: 3px; }
</style>
